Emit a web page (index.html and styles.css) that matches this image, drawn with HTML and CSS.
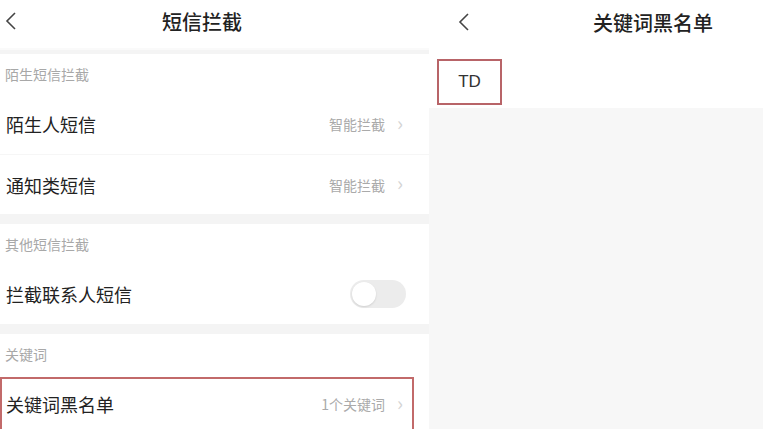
FILE: index.html
```html
<!DOCTYPE html>
<html lang="zh-CN">
<head>
    <meta charset="UTF-8">
    <meta name="viewport" content="width=device-width, initial-scale=1.0">
    <title>短信拦截</title>
    <link rel="stylesheet" href="styles.css">
</head>
<body>
    <div class="screens">
        <!-- Left: SMS blocking settings -->
        <div class="panel left">
            <div class="topbar">
                <svg class="back" width="12" height="20" viewBox="0 0 12 20"><path d="M10 2 L2 10 L10 18" fill="none" stroke="#444" stroke-width="1.6"/></svg>
                <div class="title">短信拦截</div>
            </div>

            <div class="card">
                <div class="label">陌生短信拦截</div>
                <div class="row">
                    <span class="name">陌生人短信</span>
                    <span class="value">智能拦截 <i class="arrow">›</i></span>
                </div>
                <div class="row">
                    <span class="name">通知类短信</span>
                    <span class="value">智能拦截 <i class="arrow">›</i></span>
                </div>
            </div>

            <div class="card">
                <div class="label">其他短信拦截</div>
                <div class="row">
                    <span class="name">拦截联系人短信</span>
                    <span class="switch"><span class="knob"></span></span>
                </div>
            </div>

            <div class="card">
                <div class="label">关键词</div>
                <div class="row marked">
                    <span class="name">关键词黑名单</span>
                    <span class="value">1个关键词 <i class="arrow">›</i></span>
                </div>
            </div>
        </div>

        <!-- Right: keyword blacklist -->
        <div class="panel right">
            <div class="topbar">
                <svg class="back" width="12" height="20" viewBox="0 0 12 20"><path d="M10 2 L2 10 L10 18" fill="none" stroke="#444" stroke-width="1.6"/></svg>
                <div class="title">关键词黑名单</div>
            </div>
            <div class="keywords">
                <div class="tag">TD</div>
            </div>
        </div>
    </div>
</body>
</html>
```

FILE: styles.css
```css
/* Basic Reset */
* { box-sizing: border-box; margin: 0; padding: 0; }

body {
    font-family: "Noto Sans CJK SC", "Noto Sans", sans-serif;
    background: #f5f5f5;
    color: #222;
    width: 763px;
    height: 429px;
    overflow: hidden;
}

.screens {
    display: flex;
    height: 429px;
}

.panel {
    height: 100%;
    background: #f4f4f4;
}

.panel.left {
    width: 429px;
}

.panel.right {
    flex: 1;
    background: #f7f7f7;
}

/* Top bar */
.topbar {
    height: 50px;
    background: #fff;
    display: flex;
    align-items: center;
    position: relative;
}

.left .topbar { margin-bottom: 4px; padding-left: 5px; border-bottom: 2px solid #fafafa; }
.right .topbar { padding-left: 29px; }

.back { display: block; margin-top: -6px; }

.title {
    font-size: 20px;
    font-weight: 500;
    color: #222;
    margin-top: -6px;
}

.left .title { margin-left: 145px; }
.right .title { margin-left: 123px; }

/* Cards */
.card {
    background: #fff;
    margin-bottom: 10px;
}

.label {
    height: 40px;
    display: flex;
    align-items: center;
    padding-left: 5px;
    font-size: 14px;
    color: #a8a8a8;
}

.row {
    height: 60px;
    display: flex;
    align-items: center;
    justify-content: space-between;
    padding: 0 26px 0 6px;
    position: relative;
}

.row + .row { border-top: 1px solid #f6f6f6; }

.name {
    font-size: 18px;
    color: #222;
}

.value {
    font-size: 14px;
    color: #aaa;
    display: flex;
    align-items: center;
}

.arrow {
    font-style: normal;
    font-size: 20px;
    color: #d4d4d4;
    margin-left: 12px;
    line-height: 1;
    margin-top: -3px;
}

/* Toggle */
.switch {
    width: 56px;
    height: 28px;
    border-radius: 14px;
    background: #ececec;
    display: flex;
    align-items: center;
    padding-left: 2px;
    margin-right: -3px;
}

.knob {
    width: 24px;
    height: 24px;
    border-radius: 50%;
    background: #fff;
    box-shadow: 0 1px 2px rgba(0, 0, 0, 0.12);
}

/* annotation box */
.row.marked::after {
    content: "";
    position: absolute;
    left: 0;
    top: 3px;
    width: 410px;
    height: 52px;
    border: 2px solid #c26a6a;
}

/* Keyword list */
.keywords {
    background: #fff;
    height: 58px;
    padding: 9px 0 0 8px;
}

.tag {
    width: 65px;
    height: 46px;
    border: 2px solid #b86468;
    display: flex;
    align-items: center;
    justify-content: center;
    font-family: "Liberation Sans", Arial, sans-serif;
    font-size: 17px;
    color: #333;
}
```
